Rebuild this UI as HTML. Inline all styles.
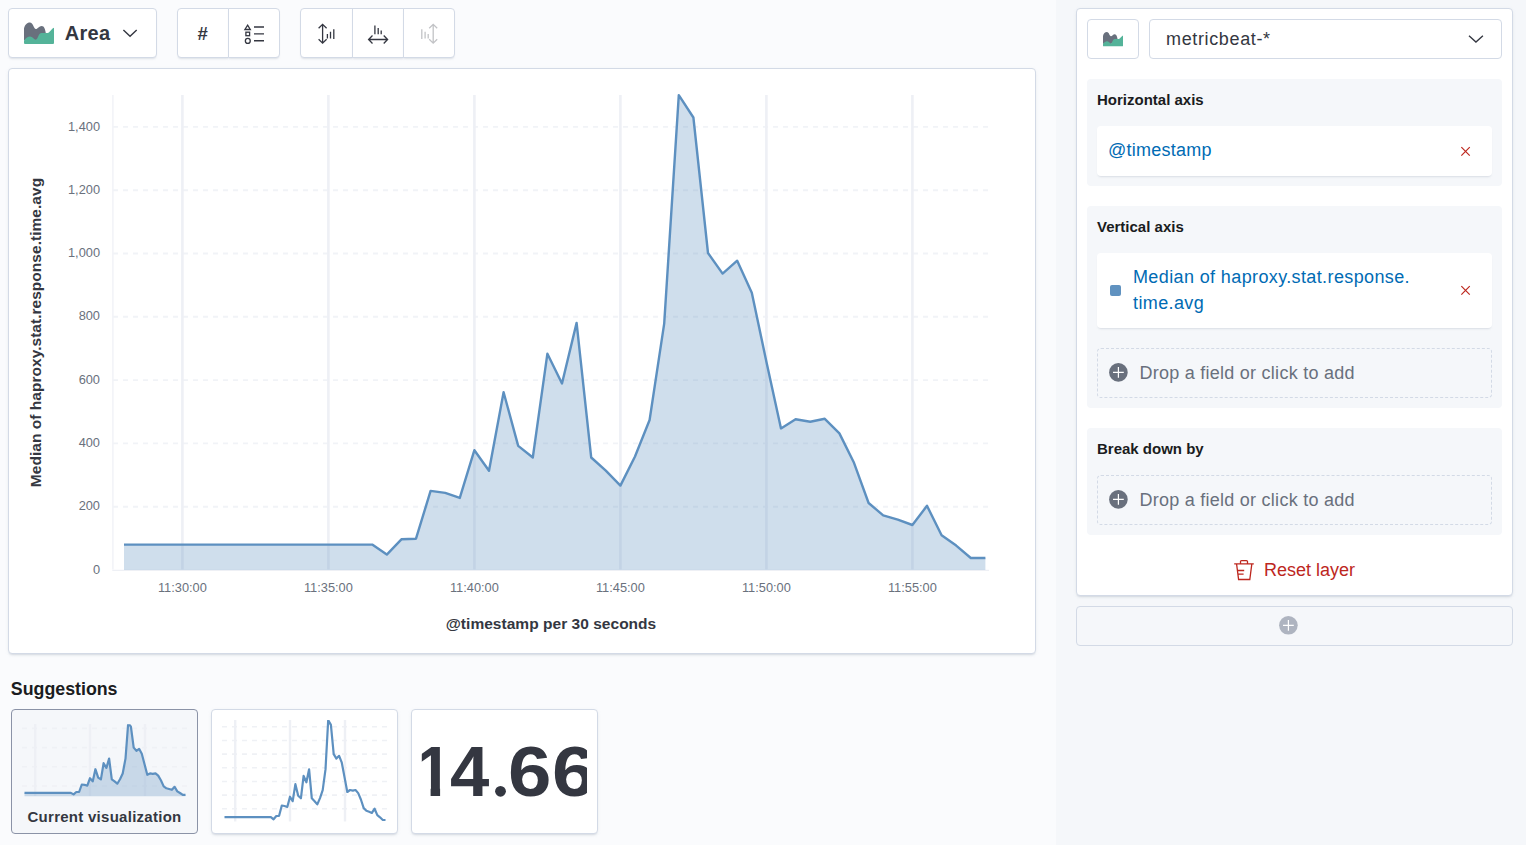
<!DOCTYPE html>
<html lang="en">
<head>
<meta charset="utf-8">
<title>Lens</title>
<style>
*{box-sizing:border-box;margin:0;padding:0}
html,body{width:1526px;height:845px;overflow:hidden}
body{background:#fafbfd;font-family:"Liberation Sans",sans-serif;color:#343741;position:relative}
.abs{position:absolute}
.rightcol{left:1056px;top:0;width:470px;height:845px;background:#f5f7fa}
.btn{background:#fff;border:1px solid #d3dae6;box-shadow:0 2px 2px -1px rgba(152,162,179,.3)}
.panel{background:#fff;border:1px solid #d3dae6;border-radius:4px;box-shadow:0 2px 2px -1px rgba(152,162,179,.3),0 1px 5px -2px rgba(152,162,179,.3)}
.areabtn{left:8px;top:8px;width:149px;height:50px;border-radius:4px}
.areabtn .lbl{left:55.700px;top:11.700px;font-weight:700;font-size:20px;line-height:24px;color:#343741;letter-spacing:0.300px}
.grp{top:8px;height:50px}
.grp .b{position:absolute;top:0;height:50px;width:52px}
.grp .b.first{border-radius:4px 0 0 4px}
.grp .b.last{border-radius:0 4px 4px 0}
.hash{font-weight:700;font-style:italic;font-size:18.500px;color:#343741;left:-1px;right:0;top:15px;text-align:center;line-height:20px}
svg{position:absolute;overflow:visible}
.hg{stroke:#f1f3f7;stroke-width:1.900;stroke-dasharray:5 5}
.vg{stroke:#eef0f5;stroke-width:2.6}
.hg2{stroke:#eff1f5;stroke-width:1.6;stroke-dasharray:5 5}
.vg2{stroke:#eef0f5;stroke-width:2.4}
.tk{font-family:"Liberation Sans",sans-serif;font-size:12.800px;fill:#6a717d}
.axt{font-family:"Liberation Sans",sans-serif;font-size:15.500px;font-weight:700;fill:#343741;letter-spacing:0.030px}
.sugtitle{left:10.800px;top:677px;font-size:17.800px;font-weight:700;color:#1a1c21;line-height:24px}
.card{top:709px;width:187px;height:125px;border-radius:4px}
.card.cur{left:11px;background:#f5f7fa;border:1px solid #8b93a7;}
.card.p{background:#fff;border:1px solid #d3dae6;box-shadow:0 2px 2px -1px rgba(152,162,179,.3),0 1px 5px -2px rgba(152,162,179,.3)}
.curlbl{left:0;right:0;top:97.200px;text-align:center;font-size:15px;font-weight:700;color:#343741;line-height:20px;letter-spacing:0.270px}
.big{left:412px;top:710px;width:175px;height:123px;overflow:hidden;white-space:nowrap;font-size:70px;font-weight:700;line-height:84px;color:#343741}
.big span{position:absolute;top:19.500px;display:block;transform-origin:0 0}
.layer{left:1076px;top:8px;width:437px;height:588px}
.sec{left:1087px;width:415px;background:#f5f7fa;border-radius:4px}
.seclbl{left:10px;top:11px;font-size:15px;font-weight:700;color:#1a1c21;line-height:20px}
.wbox{left:10px;width:395px;background:#fff;border-radius:4px;box-shadow:0 2px 2px -1px rgba(152,162,179,.3)}
.dbox{left:10px;width:395px;border:1px dashed #d3dae6;border-radius:4px}
.link{color:#006bb4;font-size:18px;line-height:26px}
.drop{left:41.400px;top:11px;font-size:18px;line-height:26px;color:#69707d;letter-spacing:0.260px}
.addlayer{left:1076px;top:606px;width:437px;height:40px;border:1px solid #d3dae6;border-radius:4px;background:#f5f7fa}
</style>
</head>
<body>
<div class="abs rightcol"></div>

<!-- toolbar -->
<div class="abs btn areabtn">
  <div class="abs lbl">Area</div>
</div>

<div class="abs grp" style="left:177px;width:103px">
  <div class="b btn first" style="left:0"><div class="abs hash">#</div></div>
  <div class="b btn last" style="left:51px">
  </div>
</div>

<div class="abs grp" style="left:300px;width:155px">
  <div class="b btn first" style="left:0;width:53px">
  </div>
  <div class="b btn" style="left:52px">
  </div>
  <div class="b btn last" style="left:103px;width:52px">
  </div>
</div>

<!-- workspace panel -->
<div class="abs panel" style="left:8px;top:68px;width:1028px;height:586px"></div>
<svg style="left:0;top:0" width="1057" height="845" viewBox="0 0 1057 845">
  <line x1="112.900" x2="112.900" y1="95" y2="569.500" stroke="#eef0f5" stroke-width="1.200"/>
  <line x1="112.300" x2="989" y1="570.300" y2="570.300" stroke="#eef0f5" stroke-width="1.200"/>
<line x1="113" x2="988" y1="506.7" y2="506.7" class="hg"/>
<line x1="113" x2="988" y1="443.4" y2="443.4" class="hg"/>
<line x1="113" x2="988" y1="380.1" y2="380.1" class="hg"/>
<line x1="113" x2="988" y1="316.8" y2="316.8" class="hg"/>
<line x1="113" x2="988" y1="253.5" y2="253.5" class="hg"/>
<line x1="113" x2="988" y1="190.2" y2="190.2" class="hg"/>
<line x1="113" x2="988" y1="126.9" y2="126.9" class="hg"/>
<line x1="182.4" x2="182.4" y1="95" y2="569.5" class="vg"/>
<line x1="328.4" x2="328.4" y1="95" y2="569.5" class="vg"/>
<line x1="474.4" x2="474.4" y1="95" y2="569.5" class="vg"/>
<line x1="620.4" x2="620.4" y1="95" y2="569.5" class="vg"/>
<line x1="766.4" x2="766.4" y1="95" y2="569.5" class="vg"/>
<line x1="912.4" x2="912.4" y1="95" y2="569.5" class="vg"/>
  <path d="M124.0 544.6 L138.6 544.6 L153.2 544.6 L167.8 544.6 L182.4 544.6 L197.0 544.6 L211.6 544.6 L226.2 544.6 L240.8 544.6 L255.4 544.6 L270.0 544.6 L284.6 544.6 L299.2 544.6 L313.8 544.6 L328.4 544.6 L343.0 544.6 L357.6 544.6 L372.2 544.6 L386.8 554.6 L401.4 539.3 L416.0 538.7 L430.6 490.9 L445.2 492.9 L459.8 497.9 L474.4 450.2 L489.0 470.7 L503.6 392.2 L518.2 445.9 L532.8 457.5 L547.4 353.7 L562.0 383.5 L576.6 322.9 L591.2 457.5 L605.8 470.7 L620.4 485.6 L635.0 456.5 L649.6 420.0 L664.2 323.6 L678.8 95.2 L693.4 117.5 L708.0 253.0 L722.6 273.6 L737.2 260.7 L751.8 292.7 L766.4 361.7 L781.0 428.4 L795.6 419.2 L810.2 421.7 L824.8 418.8 L839.4 433.4 L854.0 462.8 L868.6 503.0 L883.2 515.4 L897.8 519.6 L912.4 525.0 L927.0 505.8 L941.6 535.3 L956.2 545.6 L970.8 558.0 L985.4 558.0 L985.4 570.1 L124.0 570.1 Z" fill="#6092c0" fill-opacity="0.3"/>
  <path d="M124.0 544.6 L138.6 544.6 L153.2 544.6 L167.8 544.6 L182.4 544.6 L197.0 544.6 L211.6 544.6 L226.2 544.6 L240.8 544.6 L255.4 544.6 L270.0 544.6 L284.6 544.6 L299.2 544.6 L313.8 544.6 L328.4 544.6 L343.0 544.6 L357.6 544.6 L372.2 544.6 L386.8 554.6 L401.4 539.3 L416.0 538.7 L430.6 490.9 L445.2 492.9 L459.8 497.9 L474.4 450.2 L489.0 470.7 L503.6 392.2 L518.2 445.9 L532.8 457.5 L547.4 353.7 L562.0 383.5 L576.6 322.9 L591.2 457.5 L605.8 470.7 L620.4 485.6 L635.0 456.5 L649.6 420.0 L664.2 323.6 L678.8 95.2 L693.4 117.5 L708.0 253.0 L722.6 273.6 L737.2 260.7 L751.8 292.7 L766.4 361.7 L781.0 428.4 L795.6 419.2 L810.2 421.7 L824.8 418.8 L839.4 433.4 L854.0 462.8 L868.6 503.0 L883.2 515.4 L897.8 519.6 L912.4 525.0 L927.0 505.8 L941.6 535.3 L956.2 545.6 L970.8 558.0 L985.4 558.0" fill="none" stroke="#5d90c0" stroke-width="2.400" stroke-linejoin="round"/>
<text x="100" y="573.5" class="tk" text-anchor="end">0</text>
<text x="100" y="510.2" class="tk" text-anchor="end">200</text>
<text x="100" y="446.9" class="tk" text-anchor="end">400</text>
<text x="100" y="383.6" class="tk" text-anchor="end">600</text>
<text x="100" y="320.4" class="tk" text-anchor="end">800</text>
<text x="100" y="257.1" class="tk" text-anchor="end">1,000</text>
<text x="100" y="193.8" class="tk" text-anchor="end">1,200</text>
<text x="100" y="130.5" class="tk" text-anchor="end">1,400</text>
<text x="182.4" y="592" class="tk" text-anchor="middle">11:30:00</text>
<text x="328.4" y="592" class="tk" text-anchor="middle">11:35:00</text>
<text x="474.4" y="592" class="tk" text-anchor="middle">11:40:00</text>
<text x="620.4" y="592" class="tk" text-anchor="middle">11:45:00</text>
<text x="766.4" y="592" class="tk" text-anchor="middle">11:50:00</text>
<text x="912.4" y="592" class="tk" text-anchor="middle">11:55:00</text>
  <text class="axt" x="551" y="628.700" text-anchor="middle">@timestamp per 30 seconds</text>
  <text class="axt" transform="translate(41.400,332.500) rotate(-90)" text-anchor="middle">Median of haproxy.stat.response.time.avg</text>
</svg>

<!-- suggestions -->
<div class="abs sugtitle">Suggestions</div>
<div class="abs card cur"><div class="abs curlbl">Current visualization</div></div>
<div class="abs card p" style="left:211px"></div>
<div class="abs card p" style="left:411px"></div>
<div class="abs big"><span style="left:1.800px;clip-path:polygon(6.300px 0,100% 0,100% 57.500px,26.100px 57.500px,26.100px 84px,15.900px 84px,15.900px 57.500px,6.300px 57.500px);transform:scaleX(0.930);transform-origin:26px 0">1</span><span style="left:37.900px;transform:scaleX(1.010)">4</span><span style="left:76.500px;font-size:84px;clip-path:circle(5.400px at 12px 65px);top:16.300px">.</span><span style="left:95.800px;transform:scaleX(1.115)">6</span><span style="left:140.100px;transform:scaleX(1.115)">6</span></div>
<svg style="left:0;top:0" width="1057" height="845" viewBox="0 0 1057 845">
<line x1="22" x2="187" y1="786.0" y2="786.0" class="hg2"/>
<line x1="22" x2="187" y1="766.8" y2="766.8" class="hg2"/>
<line x1="22" x2="187" y1="747.6" y2="747.6" class="hg2"/>
<line x1="22" x2="187" y1="728.4" y2="728.4" class="hg2"/>
<line x1="35.2" x2="35.2" y1="724" y2="796" class="vg2"/>
<line x1="90.0" x2="90.0" y1="724" y2="796" class="vg2"/>
<line x1="145.0" x2="145.0" y1="724" y2="796" class="vg2"/>
  <clipPath id="c1"><rect x="20" y="724.300" width="170" height="71.900"/></clipPath><clipPath id="c2"><rect x="220" y="720" width="170" height="104"/></clipPath>
  <path d="M24.5 792.9 L27.2 792.9 L30.0 792.9 L32.7 792.9 L35.4 792.9 L38.1 792.9 L40.9 792.9 L43.6 792.9 L46.3 792.9 L49.1 792.9 L51.8 792.9 L54.5 792.9 L57.2 792.9 L60.0 792.9 L62.7 792.9 L65.4 792.9 L68.2 792.9 L70.9 792.9 L73.6 794.4 L76.3 792.0 L79.1 792.0 L81.8 784.5 L84.5 784.8 L87.3 785.6 L90.0 778.2 L92.7 781.4 L95.4 769.2 L98.2 777.6 L100.9 779.4 L103.6 763.2 L106.4 767.9 L109.1 758.5 L111.8 779.4 L114.6 781.4 L117.3 783.7 L120.0 779.2 L122.7 773.5 L125.5 758.6 L128.2 723.1 L130.9 726.6 L133.7 747.6 L136.4 750.8 L139.1 748.8 L141.8 753.8 L144.6 764.5 L147.3 774.8 L150.0 773.4 L152.8 773.8 L155.5 773.3 L158.2 775.6 L160.9 780.2 L163.7 786.4 L166.4 788.3 L169.1 789.0 L171.9 789.8 L174.6 786.8 L177.3 791.4 L180.0 793.0 L182.8 794.9 L185.5 794.9 L185.5 797 L24.5 797 Z" fill="#6092c0" fill-opacity="0.3" clip-path="url(#c1)"/>
  <path d="M24.5 792.9 L27.2 792.9 L30.0 792.9 L32.7 792.9 L35.4 792.9 L38.1 792.9 L40.9 792.9 L43.6 792.9 L46.3 792.9 L49.1 792.9 L51.8 792.9 L54.5 792.9 L57.2 792.9 L60.0 792.9 L62.7 792.9 L65.4 792.9 L68.2 792.9 L70.9 792.9 L73.6 794.4 L76.3 792.0 L79.1 792.0 L81.8 784.5 L84.5 784.8 L87.3 785.6 L90.0 778.2 L92.7 781.4 L95.4 769.2 L98.2 777.6 L100.9 779.4 L103.6 763.2 L106.4 767.9 L109.1 758.5 L111.8 779.4 L114.6 781.4 L117.3 783.7 L120.0 779.2 L122.7 773.5 L125.5 758.6 L128.2 723.1 L130.9 726.6 L133.7 747.6 L136.4 750.8 L139.1 748.8 L141.8 753.8 L144.6 764.5 L147.3 774.8 L150.0 773.4 L152.8 773.8 L155.5 773.3 L158.2 775.6 L160.9 780.2 L163.7 786.4 L166.4 788.3 L169.1 789.0 L171.9 789.8 L174.6 786.8 L177.3 791.4 L180.0 793.0 L182.8 794.9 L185.5 794.9" fill="none" stroke="#5d90c0" stroke-width="2.200" stroke-linejoin="round" clip-path="url(#c1)"/>
<line x1="222" x2="387" y1="808.8" y2="808.8" class="hg2"/>
<line x1="222" x2="387" y1="795.1" y2="795.1" class="hg2"/>
<line x1="222" x2="387" y1="781.5" y2="781.5" class="hg2"/>
<line x1="222" x2="387" y1="767.8" y2="767.8" class="hg2"/>
<line x1="222" x2="387" y1="754.1" y2="754.1" class="hg2"/>
<line x1="222" x2="387" y1="740.5" y2="740.5" class="hg2"/>
<line x1="222" x2="387" y1="726.8" y2="726.8" class="hg2"/>
<line x1="235.2" x2="235.2" y1="720" y2="821.5" class="vg2"/>
<line x1="290.0" x2="290.0" y1="720" y2="821.5" class="vg2"/>
<line x1="345.0" x2="345.0" y1="720" y2="821.5" class="vg2"/>
  <path d="M224.5 817.1 L227.2 817.1 L230.0 817.1 L232.7 817.1 L235.4 817.1 L238.1 817.1 L240.9 817.1 L243.6 817.1 L246.3 817.1 L249.1 817.1 L251.8 817.1 L254.5 817.1 L257.2 817.1 L260.0 817.1 L262.7 817.1 L265.4 817.1 L268.2 817.1 L270.9 817.1 L273.6 819.3 L276.3 816.0 L279.1 815.8 L281.8 805.5 L284.5 806.0 L287.3 807.0 L290.0 796.7 L292.7 801.2 L295.4 784.2 L298.2 795.8 L300.9 798.3 L303.6 775.9 L306.4 782.3 L309.1 769.3 L311.8 798.3 L314.6 801.2 L317.3 804.4 L320.0 798.1 L322.7 790.2 L325.5 769.4 L328.2 720.1 L330.9 724.9 L333.7 754.2 L336.4 758.6 L339.1 755.8 L341.8 762.7 L344.6 777.6 L347.3 792.0 L350.0 790.0 L352.8 790.6 L355.5 790.0 L358.2 793.1 L360.9 799.5 L363.7 808.1 L366.4 810.8 L369.1 811.7 L371.9 812.9 L374.6 808.7 L377.3 815.1 L380.0 817.3 L382.8 820.0 L385.5 820.0" fill="none" stroke="#5d90c0" stroke-width="2.200" stroke-linejoin="round" clip-path="url(#c2)"/>
</svg>

<!-- layer panel -->
<div class="abs panel layer"></div>
<div class="abs" style="left:1087px;top:19px;width:52px;height:40px;border:1px solid #d3dae6;border-radius:4px;background:#fff">
</div>
<div class="abs" style="left:1149px;top:19px;width:353px;height:40px;border:1px solid #d3dae6;border-radius:4px;background:#fff">
  <div class="abs" style="left:16px;top:6px;font-size:18px;line-height:26px;color:#343741;letter-spacing:0.640px">metricbeat-*</div>
</div>

<div class="abs sec" style="top:79px;height:107px">
  <div class="abs seclbl">Horizontal axis</div>
  <div class="abs wbox" style="top:47px;height:50px">
    <div class="abs link" style="left:11px;top:11px;letter-spacing:0.250px">@timestamp</div>
  </div>
</div>

<div class="abs sec" style="top:206px;height:202px">
  <div class="abs seclbl">Vertical axis</div>
  <div class="abs wbox" style="top:47px;height:75px">
    <div class="abs" style="left:13px;top:32px;width:11px;height:11px;background:#6092c0;border-radius:2px"></div>
    <div class="abs link" style="left:36px;top:11px;width:300px;letter-spacing:0.380px">Median of haproxy.stat.response. time.avg</div>
  </div>
  <div class="abs dbox" style="top:142px;height:50px">
    <div class="abs drop">Drop a field or click to add</div>
  </div>
</div>

<div class="abs sec" style="top:428px;height:107px">
  <div class="abs seclbl">Break down by</div>
  <div class="abs dbox" style="top:47px;height:50px">
    <div class="abs drop">Drop a field or click to add</div>
  </div>
</div>

<div class="abs" style="left:1264px;top:557px;font-size:18px;line-height:26px;color:#bd271e">Reset layer</div>

<div class="abs addlayer">
</div>
<!-- icon overlay (page coordinates) -->
<svg style="left:0;top:0" width="1526" height="845" viewBox="0 0 1526 845" fill="none">
  <!-- chart switch -->
  <g transform="translate(24,22)"><path fill="#69707d" d="M0 18V6.500C0.800 3 3 0.600 5.800 0.600 9.200 0.600 9.800 7 11.900 7 13.800 7 15 3.900 17.700 3.900 20.300 3.900 21.200 7.500 21.800 11L12 18.500z"/><path fill="#54b399" d="M0 18.500C2 16 4 14.500 6 14.500 8.500 14.500 10 17.700 11.900 17.700 14 17.700 14.300 11.100 17.500 11.100 20 11.100 21.500 11.100 23.700 10.900 25.800 10.700 27 7 30 5.700V21a1 1 0 0 1-1 1H1a1 1 0 0 1-1-1z"/></g>
  <path d="M123.400 30L130.050 36.300 136.700 30" stroke="#343741" stroke-width="1.400"/>
  <!-- legend icon -->
  <g stroke="#343741" stroke-width="1.300">
    <path d="M247.600 25.200L250.300 29.500H244.900z"/>
    <rect x="245.900" y="32.200" width="3.700" height="3.500"/>
    <circle cx="247.800" cy="40.900" r="2.450"/>
    <path d="M254 27h10M254 33.900h10M254 40.800h10" stroke-width="1.400"/>
  </g>
  <!-- axis icons -->
  <g stroke="#343741" stroke-width="1.300">
    <path d="M322.600 24.500v18.600M318.600 28.300l4-3.900 4 3.900M318.600 39.300l4 3.900 4-3.900"/>
    <path d="M327.400 34v4.500M330.500 31.800v6.700M333.800 29.300v9.600" stroke-width="1.300"/>
    <path d="M368.700 39.500h18.800M372.500 35.500l-3.900 4 3.900 4M383.700 35.500l3.900 4-3.900 4"/>
    <path d="M374.900 25.500v8.700M378.200 28v6.200M381.200 30.500v3.700" stroke-width="1.300"/>
  </g>
  <g stroke="#c2c3c6" stroke-width="1.300">
    <path d="M433.200 24.500v18.600M429.200 28.300l4-3.900 4 3.900M429.200 39.300l4 3.900 4-3.900"/>
    <path d="M421.800 29.300v9.600M425.100 31.800v6.700M428.200 34v4.500" stroke-width="1.300"/>
  </g>
  <!-- layer header -->
  <g transform="translate(1103,31.700) scale(0.6667)"><path fill="#69707d" d="M0 18V6.500C0.800 3 3 0.600 5.800 0.600 9.200 0.600 9.800 7 11.900 7 13.800 7 15 3.900 17.700 3.900 20.300 3.900 21.200 7.500 21.800 11L12 18.500z"/><path fill="#54b399" d="M0 18.500C2 16 4 14.500 6 14.500 8.500 14.500 10 17.700 11.900 17.700 14 17.700 14.300 11.100 17.500 11.100 20 11.100 21.500 11.100 23.700 10.900 25.800 10.700 27 7 30 5.700V21a1 1 0 0 1-1 1H1a1 1 0 0 1-1-1z"/></g>
  <path d="M1469 35.800L1475.950 42 1482.900 35.800" stroke="#343741" stroke-width="1.400"/>
  <!-- remove buttons -->
  <g transform="translate(1465.550,151.350)"><path d="M-4.200 -4.200l8.400 8.400M4.200 -4.200l-8.400 8.400" stroke="#bd271e" stroke-width="1.200"/></g>
  <g transform="translate(1465.550,290.400)"><path d="M-4.200 -4.200l8.400 8.400M4.200 -4.200l-8.400 8.400" stroke="#bd271e" stroke-width="1.200"/></g>
  <!-- add buttons -->
  <g transform="translate(1118.400,372.400)"><circle r="9.300" fill="#69707d"/><path d="M0 -5.400v10.800M-5.400 0h10.800" stroke="#fff" stroke-width="1.200"/></g>
  <g transform="translate(1118.400,499.400)"><circle r="9.300" fill="#69707d"/><path d="M0 -5.400v10.800M-5.400 0h10.800" stroke="#fff" stroke-width="1.200"/></g>
  <!-- trash -->
  <g transform="translate(1233,559)" stroke="#bd271e" stroke-width="1.300">
    <path d="M1.200 4.900h19.600M7.500 4.900V2.600a1 1 0 0 1 1-1h5a1 1 0 0 1 1 1v2.300M3.600 5.200l2 15.300h11.200l2-15.300M4.400 11.500h6.800M5 15.200h5.600"/>
  </g>
  <!-- add layer -->
  <g transform="translate(1288.400,625.300)"><circle r="9.300" fill="#aeb4c0"/><path d="M0 -5.400v10.800M-5.400 0h10.800" stroke="#fff" stroke-width="1.200"/></g>
</svg>
</body>
</html>
